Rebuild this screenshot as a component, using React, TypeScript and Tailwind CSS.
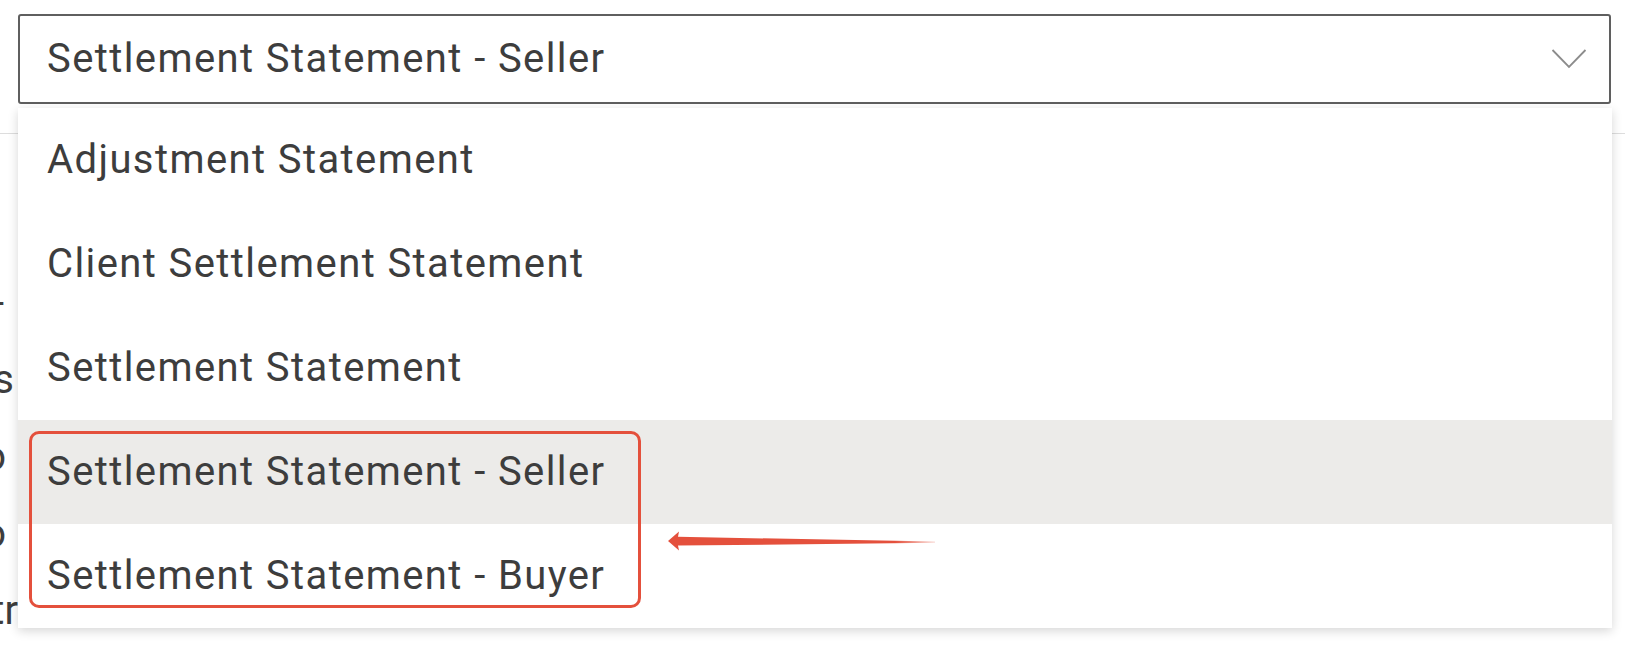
import { useState } from "react"

const options = [
  "Adjustment Statement",
  "Client Settlement Statement",
  "Settlement Statement",
  "Settlement Statement - Seller",
  "Settlement Statement - Buyer",
]

// bits of the page behind the open menu, only their last letters peek out on the left
const behind = [
  { t: "-", pr: "pr-[14px]" },
  { t: "ds", pr: "pr-[4px]" },
  { t: "o", pr: "pr-[12px]" },
  { t: "o", pr: "pr-[12px]" },
  { t: "tr", pr: "pr-0" },
]

export default function App() {
  const [selected, setSelected] = useState("Settlement Statement - Seller")
  const [hover] = useState("Settlement Statement - Seller")

  return (
    <div className="relative h-[650px] w-full overflow-hidden bg-white font-['Roboto',sans-serif] text-[#3d3d3d]">

      <div className="relative z-10 pl-[18px] pt-[14px]">
        <div className="relative w-[1593px]">
          <button className="flex h-[90px] w-full items-center justify-between rounded-[3px] border-2 border-[#5f5f5f] bg-white pl-[27px] pr-[22px] text-left">
            <span className="text-[40px] tracking-[1.4px]">{selected}</span>
            <svg width="36" height="22" viewBox="0 0 36 22" fill="none">
              <polyline points="1.5,2 18,19 34.5,2" stroke="#8c8c8c" strokeWidth="1.8" />
            </svg>
          </button>

          {/* open menu */}
          <div className="absolute left-0 top-[calc(100%+4px)] w-[1594px] bg-white shadow-[0_3px_10px_rgba(0,0,0,0.16)]">
            {options.map((o) => (
              <div
                key={o}
                onClick={() => setSelected(o)}
                className={`flex h-[104px] items-center pl-[29px] text-[40px] tracking-[1.4px] ${hover === o ? "bg-[#ecebe9]" : "bg-white"}`}
              >
                {o}
              </div>
            ))}
          </div>
        </div>
      </div>

      {/* page underneath */}
      <div className="mt-[29px] border-t border-[#dddddd]"></div>
      <div className="mt-[130px] w-[18px] overflow-hidden">
        {behind.map((b, i) => (
          <div key={i} className={`flex h-[77px] items-center justify-end whitespace-nowrap text-[40px] leading-none ${b.pr}`}>
            {b.t}
          </div>
        ))}
      </div>

      {/* annotation */}
      <div className="absolute left-[29px] top-[431px] z-20 h-[177px] w-[612px] rounded-[10px] border-[3px] border-[#e4503c]"></div>
      <svg className="absolute left-[660px] top-[525px] z-20" width="290" height="32" viewBox="660 525 290 32">
        <defs>
          <linearGradient id="fade" x1="0" x2="1" y1="0" y2="0">
            <stop offset="0" stopColor="#e4503c" />
            <stop offset="0.85" stopColor="#e4503c" />
            <stop offset="1" stopColor="#e4503c" stopOpacity="0.2" />
          </linearGradient>
        </defs>
        <polygon points="668,541 679,531.5 678,536.8 935,541.6 935,542.8 678,545.6 679,550.5" fill="url(#fade)" />
      </svg>
    </div>
  )
}
